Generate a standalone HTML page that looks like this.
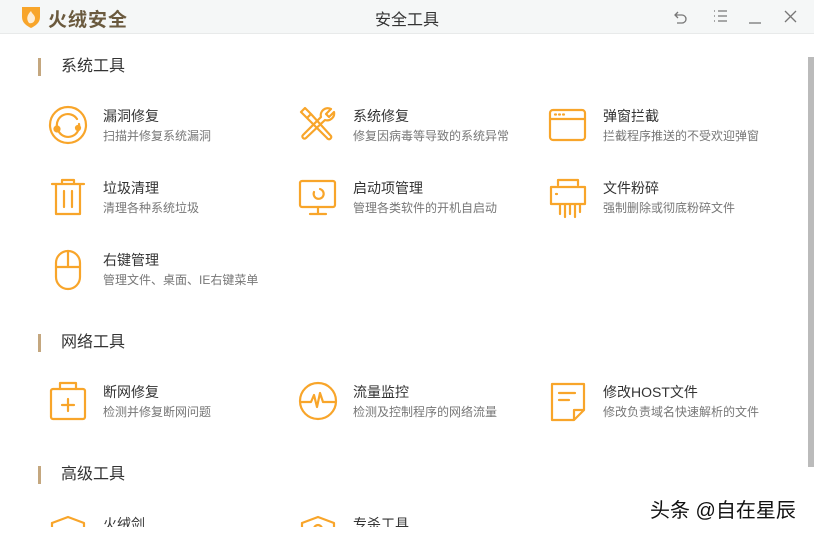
<!DOCTYPE html>
<html><head><meta charset="utf-8"><style>
*{margin:0;padding:0;box-sizing:border-box}
body{width:814px;height:533px;overflow:hidden;background:#fff;font-family:"Liberation Sans","Noto Sans CJK SC",sans-serif;position:relative}
.top{position:absolute;left:0;top:0;width:814px;height:34px;background:#f5f7f7;border-bottom:1px solid #e8eaea}
.logo{position:absolute;left:48px;top:5px;font-size:19px;font-weight:bold;color:#6b5a3e;letter-spacing:1px}
.ttl{position:absolute;left:0;width:814px;top:6px;text-align:center;font-size:16px;color:#333}
.sec{position:absolute;left:38px;font-size:16px;color:#333;padding-left:23px;line-height:18px}
.sec:before{content:"";position:absolute;left:0;top:0;width:3px;height:18px;background:#c4a77f}
.it{position:absolute}
.it b{display:block;font-weight:normal;font-size:14px;color:#333;line-height:18px}
.it i{display:block;font-style:normal;font-size:12px;color:#777;line-height:18px;margin-top:2px}
svg.ic{position:absolute;fill:none;stroke:#f8a52a;stroke-width:2.2;stroke-linecap:round;stroke-linejoin:round}
.clip{position:absolute;left:0;top:35px;width:806px;height:492px;overflow:hidden}
.wm{position:absolute;left:650px;top:494px;font-size:20px;color:#111;text-shadow:0 0 2px #fff,0 0 2px #fff}
</style></head><body>
<div class="top">
<svg style="position:absolute;left:20px;top:5px" width="22" height="24" viewBox="0 0 22 24"><path d="M2 2h18v10c0 6-5 9-9 11C7 21 2 18 2 12z" fill="#f8a52a"/><path d="M11 6c-4 4-5 8-2 12 3 1 6-1 6-5 0-3-3-4-4-7z" fill="#fff" opacity=".8"/></svg>
<div class="logo">火绒安全</div>
<div class="ttl">安全工具</div>
<svg style="position:absolute;left:674px;top:8px" width="130" height="18" viewBox="0 0 130 18" fill="none" stroke="#777" stroke-width="1.3"><path d="M4 4l-3 3 3 3M1 7h7a4 4 0 010 8H3"/><path d="M40 3h1M40 8h1M40 13h1M44 3h9M44 8h9M44 13h9"/><path d="M75 15h12"/><path d="M111 3l11 11M122 3l-11 11"/></svg>
</div>
<div style="position:absolute;left:808px;top:57px;width:6px;height:410px;background:#bbb"></div>
<div class="clip">
<div class="sec" style="top:23px">系统工具</div>
<svg class="ic" style="left:48px;top:70px" width="40" height="40" viewBox="0 0 40 40"><circle cx="20" cy="20" r="18"/><path d="M9 22a11 11 0 0 1 20-8M31 19a11 11 0 0 1-20 8"/><circle cx="9" cy="24" r="2.5" fill="#f8a52a"/><circle cx="30" cy="23" r="2" fill="#f8a52a"/></svg>
<div class="it" style="left:103px;top:72px"><b>漏洞修复</b><i>扫描并修复系统漏洞</i></div>
<svg class="ic" style="left:298px;top:70px" width="40" height="40" viewBox="0 0 40 40"><path d="M3 7l4-4 6 6-4 4zM9 13l20 20a2 2 0 0 0 4-2L13 9"/><path d="M33 4l-5 5 3 3 5-5a7 7 0 0 1-9 8L8 33a2 2 0 0 1-3-3l18-18a7 7 0 0 1 10-8z"/></svg>
<div class="it" style="left:353px;top:72px"><b>系统修复</b><i>修复因病毒等导致的系统异常</i></div>
<svg class="ic" style="left:548px;top:72px" width="40" height="36" viewBox="0 0 40 36"><rect x="2" y="3" width="35" height="30" rx="3"/><path d="M2 12h35M7 7.5h1M11 7.5h1M15 7.5h1"/></svg>
<div class="it" style="left:603px;top:72px"><b>弹窗拦截</b><i>拦截程序推送的不受欢迎弹窗</i></div>

<svg class="ic" style="left:50px;top:142px" width="36" height="40" viewBox="0 0 36 40"><path d="M2 7h32M12 7V3h12v4M6 7v30h24V7M14 14v16M22 14v16"/></svg>
<div class="it" style="left:103px;top:144px"><b>垃圾清理</b><i>清理各种系统垃圾</i></div>
<svg class="ic" style="left:298px;top:144px" width="40" height="38" viewBox="0 0 40 38"><rect x="2" y="2" width="35" height="26" rx="2"/><path d="M12 35h16M20 28v7"/><path d="M22 10a5 5 0 1 1-6 3"/></svg>
<div class="it" style="left:353px;top:144px"><b>启动项管理</b><i>管理各类软件的开机自启动</i></div>
<svg class="ic" style="left:548px;top:142px" width="40" height="42" viewBox="0 0 40 42"><path d="M10 8V3h20v5M3 27V10h34v17H3M8 17h1M12 27v10M17 27v13M22 27v10M27 27v13M32 27v8"/></svg>
<div class="it" style="left:603px;top:144px"><b>文件粉碎</b><i>强制删除或彻底粉碎文件</i></div>

<svg class="ic" style="left:54px;top:214px" width="28" height="42" viewBox="0 0 28 42"><rect x="2" y="2" width="24" height="38" rx="12"/><path d="M2 18h24M14 2v16"/></svg>
<div class="it" style="left:103px;top:216px"><b>右键管理</b><i>管理文件、桌面、IE右键菜单</i></div>

<div class="sec" style="top:299px">网络工具</div>
<svg class="ic" style="left:49px;top:346px" width="38" height="40" viewBox="0 0 38 40"><rect x="2" y="8" width="34" height="30" rx="2"/><path d="M11 8V2h16v6M19 18v12M13 24h12"/></svg>
<div class="it" style="left:103px;top:348px"><b>断网修复</b><i>检测并修复断网问题</i></div>
<svg class="ic" style="left:298px;top:346px" width="40" height="40" viewBox="0 0 40 40"><circle cx="20" cy="20" r="18"/><path d="M3 21h10l3-7 3 12 3-14 3 9h13"/></svg>
<div class="it" style="left:353px;top:348px"><b>流量监控</b><i>检测及控制程序的网络流量</i></div>
<svg class="ic" style="left:550px;top:347px" width="36" height="40" viewBox="0 0 36 40"><path d="M2 2h32v26l-10 10H2zM24 38V28h10M9 11h16M9 18h10"/></svg>
<div class="it" style="left:603px;top:348px"><b>修改HOST文件</b><i>修改负责域名快速解析的文件</i></div>

<div class="sec" style="top:431px">高级工具</div>
<svg class="ic" style="left:50px;top:480px" width="36" height="30" viewBox="0 0 36 30"><path d="M2 8l16-6 16 6v20"/><path d="M2 8v20"/></svg>
<div class="it" style="left:103px;top:480px"><b>火绒剑</b></div>
<svg class="ic" style="left:300px;top:480px" width="36" height="30" viewBox="0 0 36 30"><path d="M2 8l16-6 16 6v20M2 8v20"/><circle cx="18" cy="14" r="4"/></svg>
<div class="it" style="left:353px;top:480px"><b>专杀工具</b></div>
</div>
<div class="wm">头条 @自在星辰</div>
</body></html>
